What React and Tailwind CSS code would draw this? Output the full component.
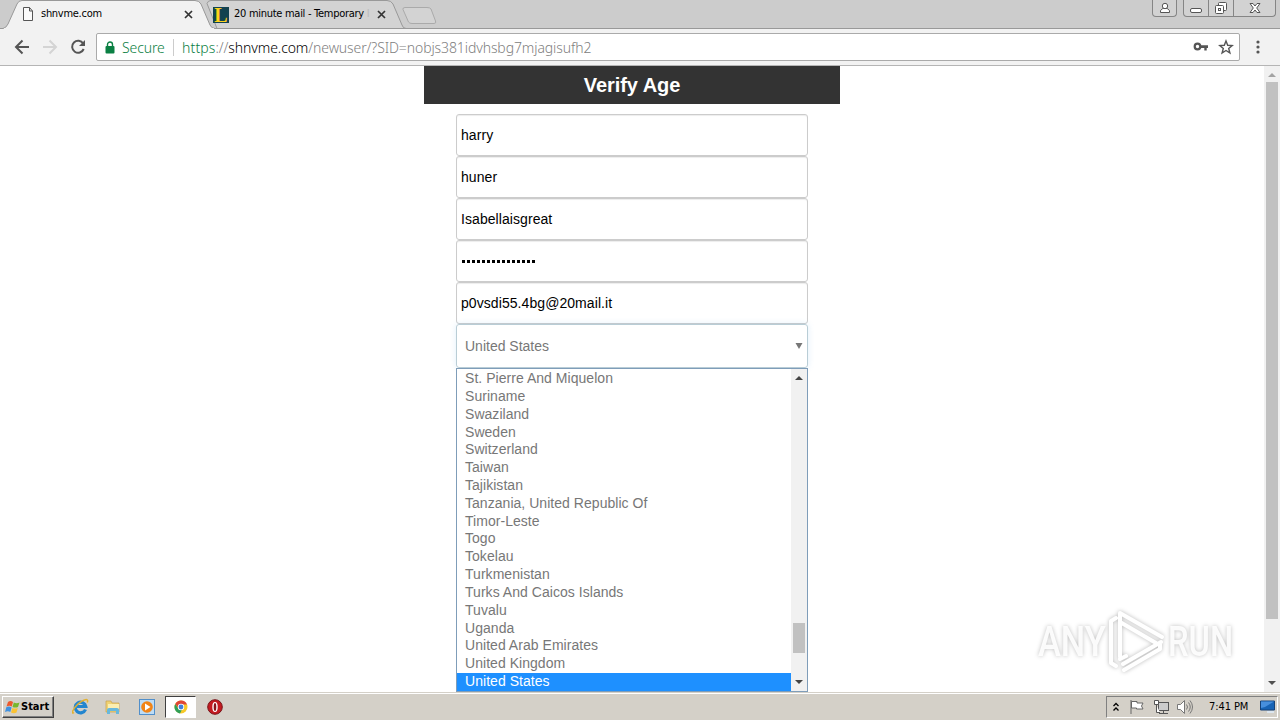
import clsx from 'clsx';

const fields = ['harry', 'huner', 'Isabellaisgreat', '', 'p0vsdi55.4bg@20mail.it'];

const countries = [
  'St. Pierre And Miquelon',
  'Suriname',
  'Swaziland',
  'Sweden',
  'Switzerland',
  'Taiwan',
  'Tajikistan',
  'Tanzania, United Republic Of',
  'Timor-Leste',
  'Togo',
  'Tokelau',
  'Turkmenistan',
  'Turks And Caicos Islands',
  'Tuvalu',
  'Uganda',
  'United Arab Emirates',
  'United Kingdom',
  'United States',
];

const CloseIcon = () => (
  <svg width="9" height="9" viewBox="0 0 9 9" className="mt-px shrink-0">
    <path d="M1 1l7 7M8 1L1 8" stroke="#333" strokeWidth="1.7" fill="none" />
  </svg>
);

const WindowButtons = () => (
  <div className="ml-auto mr-[4px] flex h-[17px] gap-[6px]">
    <div className="flex w-[25px] justify-center rounded-b-[4px] border border-t-0 border-[#858585] bg-[#d2d2d2] pt-[2px]">
      <svg width="12" height="12" viewBox="0 0 12 12" fill="#fff" stroke="#555">
        <path d="M1.500 10.500v-2l2.300-2h4.400l2.300 2v2z" />
        <circle cx="6" cy="4" r="2.700" />
      </svg>
    </div>
    <div className="flex w-[93px] rounded-b-[4px] border border-t-0 border-[#858585] bg-[#d2d2d2]">
      <div className="flex w-[25px] justify-center border-r border-[#858585]">
        <svg width="14" height="16" fill="#fff" stroke="#555">
          <rect x="1.500" y="8.500" width="11" height="4" rx="1.500" />
        </svg>
      </div>
      <div className="flex w-[25px] justify-center border-r border-[#858585]">
        <svg width="14" height="16" fill="#fff" stroke="#555">
          <rect x="4.500" y="2.500" width="8" height="8" rx="1" />
          <rect x="1.500" y="5.500" width="8" height="8" rx="1" />
          <rect x="4.500" y="8.500" width="2" height="2" />
        </svg>
      </div>
      <div className="flex flex-1 justify-center">
        <svg width="14" height="16" fill="#fff" stroke="#555">
          <path d="M2 3.500h3l2 2.500 2-2.500h3L8.700 8l3.300 4.500H9L7 10l-2 2.500H2L5.300 8z" />
        </svg>
      </div>
    </div>
  </div>
);

const TabStrip = () => (
  <div className="relative flex h-[29px] border-b border-[#999] bg-[#ccc] font-['DejaVu_Sans_Condensed','DejaVu_Sans',sans-serif] text-[11px] text-black">
    <svg width="450" height="29" className="absolute top-0 left-0">
      <path d="M207 3.500Q208 .5 211 .5H387Q391 .5 393 4L402 25Q403 28.500 406 28.500H217z" fill="#d3d3d3" stroke="#999" />
      <path d="M-1 28.500H3Q6 28 8 24L17 4Q18.500 .5 22 .5H195Q199 .5 201 4L210 25Q211.500 28.500 215 28.500V30H-1z" fill="#f2f2f2" stroke="#999" />
      <path d="M4 29H214" stroke="#f2f2f2" strokeWidth="2" />
      <path d="M405 7.500H427Q430 7.500 431 9L435.500 21Q436.500 23.500 434 23.500H412Q409.500 23.500 408.500 22L403 9.500Q402.500 7.500 405 7.500z" fill="#d3d3d3" stroke="#aaa" />
    </svg>
    <div className="relative flex w-[213px] items-center pl-[22px]">
      <svg width="12" height="14" viewBox="0 0 12 14" fill="#fafafa" stroke="#555">
        <path d="M1.500 .5h6l3 3.500v9.500h-9zM7.500 .5V4h3" />
      </svg>
      <span className="ml-[7px] w-[143px] tracking-[-0.28px]">shnvme.com</span>
      <CloseIcon />
    </div>
    <div className="relative flex w-[190px] items-center">
      <div className="mt-px flex h-4 w-4 items-center justify-center bg-[#12424f] font-['Liberation_Serif',serif] text-[20px] leading-none font-bold text-[#ffd21c]">
        L
      </div>
      <span className="ml-[5px] w-[143px] overflow-hidden whitespace-nowrap tracking-[-0.28px]">
        20 minute mail - Temporary <span className="text-[#bbb]">I</span>
      </span>
      <CloseIcon />
    </div>
    <WindowButtons />
  </div>
);

const Toolbar = () => (
  <div className="flex h-[37px] items-center border-b border-[#b5b5b5] bg-[#f2f2f2]">
    <svg width="76" height="20" className="ml-[14px] shrink-0" fill="none" strokeWidth="2">
      <path d="M15 10H2.500M8.500 3.500L2 10l6.500 6.500" stroke="#555" />
      <path d="M29 10h12.500M35.500 3.500L42 10l-6.500 6.500" stroke="#d4d4d4" />
      <path d="M69.200 6.500A6 6 0 1 0 69.700 12" stroke="#555" />
      <path d="M71 3v6h-6z" fill="#555" />
    </svg>
    <div className="ml-[6px] flex h-7 w-[1144px] items-center rounded-[2px] border border-[#aaa] bg-white pr-[5px] pl-[8px] font-['Noto_Sans',sans-serif] text-[14px] font-light">
      <svg width="10" height="13" viewBox="0 0 10 13">
        <path d="M2.500 6V3.500a2.500 2.500 0 0 1 5 0V6" fill="none" stroke="#0b8043" strokeWidth="1.400" />
        <rect x=".5" y="5" width="9" height="7.500" rx="1" fill="#0b8043" />
      </svg>
      <span className="ml-[7px] w-[51px] text-[#0b8043] tracking-[-0.1px]">Secure</span>
      <span className="h-[17px] w-px bg-[#ccc]" />
      <span className="ml-[8px] whitespace-nowrap text-[#808080] tracking-[-0.12px]">
        <span className="text-[#0b8043] tracking-[0.15px]">https</span>://<span className="text-black tracking-[-0.1px]">shnvme.com</span>
        <span className="tracking-[-0.1px]">/newuser/?SID=nobjs381idvhsbg7mjagisufh2</span>
      </span>
      <svg width="16" height="12" viewBox="0 0 16 12" className="ml-auto shrink-0">
        <circle cx="4.500" cy="5.500" r="2.800" fill="none" stroke="#555" strokeWidth="2.200" />
        <path d="M7 4.300h8v2.700h-1.300v2.500h-2.400V7H7z" fill="#555" />
      </svg>
      <svg width="16" height="16" viewBox="0 0 16 16" className="ml-[9px] shrink-0">
        <path d="M8 2l1.700 4.300 4.500.3-3.500 2.900 1.200 4.500L8 11.500 4.100 14l1.200-4.500-3.500-2.900 4.500-.3z" fill="none" stroke="#555" strokeWidth="1.400" />
      </svg>
    </div>
    <svg width="4" height="14" className="ml-[16px]" fill="#555">
      <circle cx="2" cy="2" r="1.600" />
      <circle cx="2" cy="7" r="1.600" />
      <circle cx="2" cy="12" r="1.600" />
    </svg>
  </div>
);

const VerifyForm = () => (
  <div className="ml-[424px] w-[416px] font-['Liberation_Sans',Arial,sans-serif] text-[14px]">
    <h1 className="h-[38px] bg-[#333] text-center text-[20px] leading-[38px] font-bold text-white tracking-[-0.05px]">Verify Age</h1>
    <form className="mx-8 mt-[10px]">
      {fields.map((value, i) => (
        <div key={i} className="flex h-[42px] items-center rounded-[3px] border border-[#ccc] px-[4px] text-black tracking-[0.07px] shadow-[inset_0_1px_1px_rgba(0,0,0,0.075)]">
          {value || (
            <span className="ml-px flex gap-[2px]">
              {Array.from({ length: 15 }, (_, n) => (
                <span key={n} className="h-[3px] w-[3px] bg-black" />
              ))}
            </span>
          )}
        </div>
      ))}
      <div className="flex h-[44px] items-center justify-between rounded-[3px] border border-[#b9cdd6] pr-[4px] pl-[8px] text-[#777] shadow-[0_0_6px_rgba(102,175,233,0.2)]">
        United States
        <svg width="8" height="6" fill="#777">
          <path d="M.5 0h7L4 6z" />
        </svg>
      </div>
      <div className="flex h-[324px] border border-[#7f9db9] bg-white text-[#777]">
        <ul className="flex-1 pt-[.15px]">
          {countries.map((name) => (
            <li
              key={name}
              className={clsx(
                'h-[17.82px] pl-[8px] tracking-[0.04px]',
                name === 'United States' ? 'mt-px bg-[#1e90ff] leading-[16px] text-white' : 'leading-[18px]'
              )}
            >
              {name}
            </li>
          ))}
        </ul>
        <div className="flex w-[16px] flex-col items-center bg-[#f1f1f1] pt-[7px] pb-[7px]">
          <svg width="8" height="4" fill="#444">
            <path d="M0 4h8L4 0z" />
          </svg>
          <div className="mt-[243px] h-[30px] w-[12px] bg-[#c1c1c1]" />
          <svg width="8" height="4" fill="#444" className="mt-auto">
            <path d="M0 0h8L4 4z" />
          </svg>
        </div>
      </div>
    </form>
  </div>
);

const Watermark = () => (
  <div className="absolute top-[610px] left-[1038px] flex h-[62px] w-[196px] items-center justify-between font-['Roboto',sans-serif] text-[43px] leading-none text-white/90 [filter:drop-shadow(0_0_2px_rgba(0,0,0,0.28))]">
    <span className="mt-[1px] w-[66px] origin-left scale-x-[0.8] font-medium">ANY</span>
    <svg width="60" height="62" viewBox="0 0 60 62" className="shrink-0" fill="none" stroke="#fff" strokeWidth="4" strokeLinejoin="round" strokeLinecap="round">
      <path d="M10 8L5 11v42l5 3M14 47V3L56 27M14 12L50 33M14 49l6-3M17 54L55 32M18 60l36-21v-6" />
    </svg>
    <span className="mt-[1px] w-[66px] origin-left scale-x-[0.76] font-medium">RUN</span>
  </div>
);

const Taskbar = () => (
  <div className="flex h-[28px] items-center border-t border-[#d4d0c8] bg-[#d4d0c8] pr-[2px] pl-[2px] font-['DejaVu_Sans_Condensed','DejaVu_Sans',sans-serif] text-[11px] text-black shadow-[inset_0_1px_0_#fff]">
    <div className="mt-px flex h-[22px] w-[52px] items-center border border-t-white border-r-[#404040] border-b-[#404040] border-l-white pl-[2px] shadow-[inset_-1px_-1px_0_#808080]">
      <svg width="15" height="14" viewBox="0 0 15 14" className="shrink-0">
        <path d="M3 2Q5.500 0 8 2L6.800 6.500Q4.500 5 1.500 6.500z" fill="#ed592c" />
        <path d="M8.800 2.500Q11.500 4 14.500 2.500L13 7Q10.500 8.200 7.500 7z" fill="#78b72b" />
        <path d="M1.300 7.300Q4 5.700 6.600 7.500L5.300 12Q3 10.300 0 12z" fill="#3f91e0" />
        <path d="M7.400 8Q10 9.200 12.800 8L11.500 12.500Q9 14 6 12.500z" fill="#fbc332" />
      </svg>
      <span className="ml-px mt-px font-bold">Start</span>
    </div>
    <div className="ml-[18px] flex items-center">
      <svg width="17" height="17" viewBox="0 0 17 17" fill="none">
        <path d="M13.500 11.500A5.300 5.300 0 1 1 13.800 8.500H5" stroke="#2386cf" strokeWidth="3.200" />
        <path d="M2 14.500C-1 17 .3 11 6 6S17 0 15.300 4.500" stroke="#e3b12f" strokeWidth="1.500" />
      </svg>
      <svg width="16" height="16" viewBox="0 0 16 16" className="ml-[16px]">
        <path d="M1 2h5l1 2h7v9H1z" fill="#efd273" stroke="#c9a24a" strokeWidth=".7" />
        <path d="M3 5h11v5H3z" fill="#fbeeb0" />
        <path d="M2 15v-4q0-2 2-2h8q2 0 2 2v4h-3v-3H5v3z" fill="#68b8dc" />
      </svg>
      <svg width="16" height="16" viewBox="0 0 16 16" className="ml-[18px]">
        <rect x=".5" y=".5" width="15" height="15" fill="#bddcf5" stroke="#518fca" />
        <circle cx="8" cy="8" r="5.800" fill="#f18416" />
        <path d="M6 4.500v7L11.500 8z" fill="#fff" />
      </svg>
      <div className="ml-[10px] flex h-[22px] w-[31px] items-center justify-center border border-t-[#404040] border-r-white border-b-white border-l-[#404040] bg-white">
        <svg width="14" height="14" viewBox="0 0 14 14">
          <circle cx="7" cy="7" r="6.500" fill="#f7c928" />
          <path d="M1.200 4A6.500 6.500 0 0 1 13 4.500H7L4.500 8z" fill="#df4636" />
          <path d="M1.200 4L5 9.500h3l-2 4A6.500 6.500 0 0 1 1.200 4z" fill="#2f9f58" />
          <circle cx="7" cy="7" r="3.200" fill="#fff" />
          <circle cx="7" cy="7" r="2.400" fill="#407fda" />
        </svg>
      </div>
      <svg width="16" height="16" viewBox="0 0 16 16" className="ml-[11px]">
        <circle cx="8" cy="8" r="7.300" fill="#c41a20" stroke="#78151a" />
        <ellipse cx="8" cy="8" rx="2.700" ry="5" fill="#fff" />
        <ellipse cx="8" cy="8" rx="1.300" ry="4" fill="#88141a" />
      </svg>
    </div>
    <div className="mt-px ml-auto flex h-[22px] w-[172px] items-center border border-t-[#808080] border-r-white border-b-white border-l-[#808080] pl-[6px]">
      <svg width="6" height="10" viewBox="0 0 6 10" fill="none" stroke="#000" strokeWidth="1.300">
        <path d="M.5 4L3 1.500 5.500 4M.5 8.500L3 6l2.500 2.500" />
      </svg>
      <svg width="16" height="16" viewBox="0 0 16 16" className="ml-[10px]" fill="#fff" stroke="#666">
        <path d="M2 1v14M2.500 2.500h5.500v1.500h6l-1.500 3 1.500 3H7.500V9h-5z" />
      </svg>
      <svg width="17" height="16" viewBox="0 0 17 16" className="ml-[8px]" fill="#fff" stroke="#555">
        <rect x="5.500" y="3.500" width="10" height="8" fill="#ccc" />
        <path d="M6 14.500h9M10.500 12v2M1.500 1.500h4v4h-4zM3.500 6v7.500H7" />
      </svg>
      <svg width="17" height="16" viewBox="0 0 17 16" className="ml-[6px]" fill="#fff" stroke="#777">
        <path d="M1.500 5.500h3l4-4v13l-4-4h-3z" />
        <path d="M10.500 5.500q2 2.500 0 5M12.500 3.500q3.500 4.500 0 9M14 1.500q5 6.500 0 13" fill="none" />
      </svg>
      <span className="ml-[16px] w-[51px] whitespace-nowrap tracking-[-0.08px]">7:41 PM</span>
      <svg width="16" height="14" viewBox="0 0 16 14">
        <path d="M.5 1h14v9H.5z" fill="#1763b5" stroke="#164278" />
        <path d="M1 1.500h13L5 7 1 8z" fill="#478fdd" />
        <path d="M7 11h7v2H7z" fill="#dce6ef" />
      </svg>
    </div>
  </div>
);

export default function App() {
  return (
    <div className="relative flex h-[720px] w-[1280px] flex-col overflow-hidden bg-white">
      <TabStrip />
      <Toolbar />
      <main className="flex h-[626px] justify-between bg-white">
        <VerifyForm />
        <div className="flex w-[16px] flex-col items-center bg-[#f1f1f1] py-[7px]">
          <svg width="8" height="4" fill="#a3a3a3">
            <path d="M0 4h8L4 0z" />
          </svg>
          <div className="mt-[5px] h-[537px] w-[12px] bg-[#c1c1c1]" />
          <svg width="8" height="4" fill="#505050" className="mt-auto">
            <path d="M0 0h8L4 4z" />
          </svg>
        </div>
      </main>
      <Taskbar />
      <Watermark />
    </div>
  );
}
